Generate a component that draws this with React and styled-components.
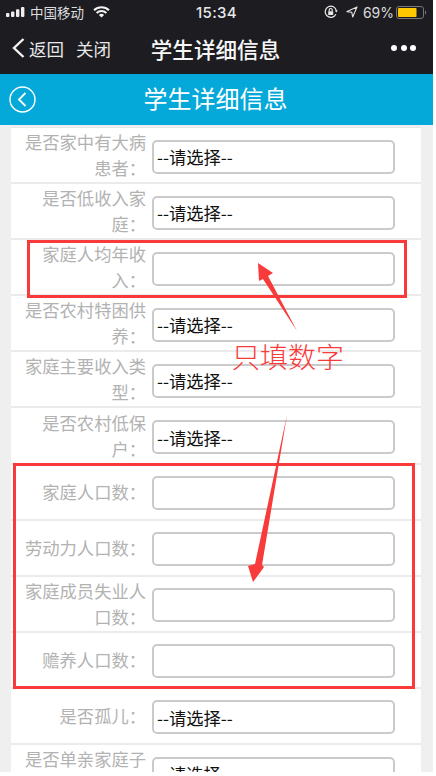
import React from "react";
import styled, { createGlobalStyle } from "styled-components";

const GlobalStyle = createGlobalStyle`
  html, body {
    margin: 0;
    padding: 0;
    background: #fff;
  }
  body {
    font-family: "Noto Sans CJK SC", "Noto Sans", sans-serif;
  }
`;

const Screen = styled.div`
  position: relative;
  width: 433px;
  height: 772px;
  overflow: hidden;
  background: #efefef;
`;

const DarkHeader = styled.header`
  height: 74px;
  background: #1c1c21;
  color: #fff;
  display: flex;
  flex-direction: column;
`;

const StatusBar = styled.div`
  height: 24px;
  display: grid;
  grid-template-columns: 1fr auto 1fr;
  align-items: center;
  padding: 0 6px 0 6px;
  font-size: 13.5px;
  color: #dcdcde;
`;

const StatusGroup = styled.div`
  display: flex;
  align-items: center;
  justify-content: ${props => (props.$end ? "flex-end" : "flex-start")};
`;

const Carrier = styled.span`
  margin: 0 9px 0 5px;
`;

const Clock = styled.span`
  font-family: Inter, "Liberation Sans", sans-serif;
  font-size: 15px;
  font-weight: 500;
  letter-spacing: 0.3px;
  color: #e8e8e8;
`;

const Percent = styled.span`
  font-family: Inter, "Liberation Sans", sans-serif;
  font-size: 14px;
  margin: 0 2px 0 5px;
`;

const NavBar = styled.div`
  flex: 1;
  display: grid;
  grid-template-columns: 1fr auto 1fr;
  align-items: center;
  padding: 0 14px 2px 12px;
`;

const NavLeft = styled.div`
  display: flex;
  align-items: center;
  font-size: 17.5px;
  color: #e8e8e8;
`;

const NavLink = styled.span`
  margin-left: ${props => props.$gap}px;
`;

const NavTitle = styled.div`
  font-size: 21.6px;
  font-weight: 500;
  color: #f6f6f6;
`;

const Dots = styled.div`
  display: flex;
  justify-content: flex-end;
  gap: 3.5px;
  margin-right: 3px;
`;

const Dot = styled.i`
  width: 6px;
  height: 6px;
  border-radius: 50%;
  background: #fff;
`;

const BlueBar = styled.div`
  height: 51px;
  background: #04a8d9;
  display: grid;
  grid-template-columns: 1fr auto 1fr;
  align-items: center;
  padding: 0 11px 0 9px;
  color: #fff;
`;

const BlueTitle = styled.h1`
  margin: 0 0 4px;
  font-size: 24px;
  font-weight: 400;
  line-height: 1;
`;

const FormList = styled.div`
  margin: 2px 12px 0 11px;
  background: #fff;
  border-top: 1px solid #e8e8e8;
`;

const Row = styled.div`
  box-sizing: border-box;
  height: 56.1px;
  display: flex;
  align-items: center;
  padding-left: 13px;
  border-bottom: 2px solid #ebebeb;
`;

const Label = styled.label`
  width: 122px;
  flex: none;
  text-align: right;
  font-size: 17.3px;
  line-height: 26px;
  color: #b2b2b2;
`;

const fieldBase = `
  box-sizing: border-box;
  width: 243px;
  height: 34px;
  margin: 3px 0 0 6px;
  border: 2px solid #cacaca;
  border-radius: 5px;
  background: #fff;
  outline: 0;
  font-family: "Noto Sans CJK SC", "Noto Sans", sans-serif;
  font-size: 17.3px;
  color: #111;
`;

const Select = styled.select`
  ${fieldBase}
  appearance: none;
  -webkit-appearance: none;
  padding: 0 3px;
`;

const TextField = styled.input`
  ${fieldBase}
  padding: 0 3px;
`;

const RedFrame = styled.div`
  position: absolute;
  box-sizing: border-box;
  left: ${props => props.$left}px;
  top: ${props => props.$top}px;
  width: ${props => props.$width}px;
  height: ${props => props.$height}px;
  border: 3px solid #f93a3a;
`;

const ArrowLayer = styled.svg`
  position: absolute;
  left: 0;
  top: 0;
`;

const Note = styled.div`
  position: absolute;
  left: 232px;
  top: 335px;
  font-size: 28px;
  line-height: 42px;
  font-weight: 300;
  color: #f93a3a;
`;

const rows = [
  { label: "是否家中有大病患者：", kind: "select" },
  { label: "是否低收入家庭：", kind: "select" },
  { label: "家庭人均年收入：", kind: "input" },
  { label: "是否农村特困供养：", kind: "select" },
  { label: "家庭主要收入类型：", kind: "select" },
  { label: "是否农村低保户：", kind: "select" },
  { label: "家庭人口数：", kind: "input" },
  { label: "劳动力人口数：", kind: "input" },
  { label: "家庭成员失业人口数：", kind: "input" },
  { label: "赡养人口数：", kind: "input" },
  { label: "是否孤儿：", kind: "select" },
  { label: "是否单亲家庭子女：", kind: "select" }
];

const SignalIcon = () => (
  <svg width="19" height="10" viewBox="0 0 19 10">
    <rect x="0" y="6" width="3.4" height="4" rx="1" fill="#eee" />
    <rect x="5" y="4.4" width="3.4" height="5.6" rx="1" fill="#eee" />
    <rect x="10" y="2.2" width="3.4" height="7.8" rx="1" fill="#eee" />
    <rect x="15" y="0" width="3.4" height="10" rx="1" fill="#eee" />
  </svg>
);

const WifiIcon = () => (
  <svg width="17" height="12" viewBox="0 0 17 12" fill="none" stroke="#f2f2f2" strokeWidth="2">
    <path d="M1 4.2a11 11 0 0 1 15 0" />
    <path d="M3.6 6.9a7.2 7.2 0 0 1 9.8 0" />
    <path d="M8.5 11.6 5.9 9.1a3.7 3.7 0 0 1 5.2 0z" fill="#f2f2f2" stroke="none" />
  </svg>
);

const RotationIcon = () => (
  <svg width="14" height="14" viewBox="0 0 14 14" fill="none" stroke="#e8e8e8" strokeWidth="1.2">
    <path d="M11.9 9.2A5.6 5.6 0 1 1 12.4 6" />
    <path d="M10.8 5.6h3l-1.5 1.8z" fill="#e8e8e8" stroke="none" />
    <rect x="4.2" y="6.2" width="5" height="3.8" rx="0.5" fill="#e8e8e8" stroke="none" />
    <path d="M5.2 6.2V5a1.5 1.5 0 0 1 3 0v1.2" />
  </svg>
);

const LocationIcon = () => (
  <svg width="12" height="12" viewBox="0 0 12 12" fill="none" stroke="#e4e4e4" strokeWidth="1.1" style={{ marginLeft: 8 }}>
    <path d="M11 1 1 5.6l4.8.7.9 4.7z" strokeLinejoin="round" />
  </svg>
);

const BatteryIcon = () => (
  <svg width="31" height="13" viewBox="0 0 31 13">
    <rect x="0.5" y="0.5" width="27" height="12" rx="2.5" fill="none" stroke="#77777a" />
    <rect x="2" y="2" width="18.5" height="9" rx="0.8" fill="#ffc800" />
    <path d="M29 4.6c.8.2 1.2.9 1.2 1.9s-.4 1.7-1.2 1.9z" fill="#77777a" />
  </svg>
);

const BackChevron = () => (
  <svg width="13" height="20" viewBox="0 0 13 20" fill="none" stroke="#f2f2f2" strokeWidth="2.4">
    <path d="M11.5 1 2 10l9.5 9" />
  </svg>
);

const CircleBack = () => (
  <svg width="27" height="27" viewBox="0 0 27 27" fill="none" stroke="#fff" strokeWidth="1.4">
    <circle cx="13.5" cy="13.5" r="12.5" />
    <path d="M16.5 7 10 13.5l6.5 6.5" strokeWidth="1.8" />
  </svg>
);

const Arrows = () => (
  <ArrowLayer width="433" height="772" viewBox="0 0 433 772" fill="#f93a3a">
    <polygon points="258,263 273,273 268,276 297,331 263,279 259,281" />
    <polygon points="287,415 262,565 264,567 253,582 248,566 255,564" />
  </ArrowLayer>
);

export default function App() {
  return (
    <Screen>
      <GlobalStyle />
      <DarkHeader>
        <StatusBar>
          <StatusGroup>
            <SignalIcon />
            <Carrier>中国移动</Carrier>
            <WifiIcon />
          </StatusGroup>
          <Clock>15:34</Clock>
          <StatusGroup $end>
            <RotationIcon />
            <LocationIcon />
            <Percent>69%</Percent>
            <BatteryIcon />
          </StatusGroup>
        </StatusBar>
        <NavBar>
          <NavLeft>
            <BackChevron />
            <NavLink $gap={4}>返回</NavLink>
            <NavLink $gap={12}>关闭</NavLink>
          </NavLeft>
          <NavTitle>学生详细信息</NavTitle>
          <Dots>
            <Dot />
            <Dot />
            <Dot />
          </Dots>
        </NavBar>
      </DarkHeader>
      <BlueBar>
        <CircleBack />
        <BlueTitle>学生详细信息</BlueTitle>
      </BlueBar>
      <FormList>
        {rows.map(row => (
          <Row key={row.label}>
            <Label>{row.label}</Label>
            {row.kind === "select" ? (
              <Select defaultValue="">
                <option value="">--请选择--</option>
              </Select>
            ) : (
              <TextField type="text" />
            )}
          </Row>
        ))}
      </FormList>
      <RedFrame $left={27} $top={240} $width={380} $height={58} />
      <RedFrame $left={13} $top={463} $width={402} $height={226} />
      <Arrows />
      <Note>只填数字</Note>
    </Screen>
  );
}
